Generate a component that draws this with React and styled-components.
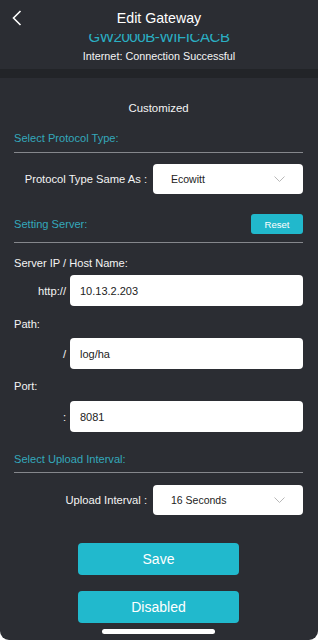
import React from 'react';
import styled, { createGlobalStyle } from 'styled-components';

const GlobalStyle = createGlobalStyle`
    html, body {
        margin: 0;
        padding: 0;
        background: #ffffff;
    }
    * {
        box-sizing: border-box;
    }
`;

const Screen = styled.div`
    width: 318px;
    height: 640px;
    overflow: hidden;
    display: flex;
    flex-direction: column;
    background: #2b2d33;
    border-radius: 0 0 9px 9px;
    font-family: "Liberation Sans", Arial, sans-serif;
    color: #f2f2f2;
`;

const Header = styled.header`
    height: 34px;
    display: grid;
    grid-template-columns: 34px 1fr 34px;
    align-items: center;
    position: relative;
    z-index: 1;
    background: #2b2d33;
`;

const BackButton = styled.button`
    width: 34px;
    height: 34px;
    padding: 0 0 0 12px;
    border: none;
    background: transparent;
    display: flex;
    align-items: center;
    cursor: pointer;
`;

const Title = styled.h1`
    margin: 0;
    text-align: center;
    font-size: 14.2px;
    font-weight: 400;
    color: #ffffff;
    line-height: 36px;
`;

// the list is scrolled a little, so the gateway name slides under the bar
const Info = styled.div`
    height: 35px;
    overflow: hidden;
    text-align: center;
`;

const DeviceName = styled.div`
    margin-top: -5px;
    font-size: 15px;
    letter-spacing: -0.4px;
    line-height: 16px;
    color: #2aafc3;
`;

const Status = styled.div`
    margin-top: 4px;
    font-size: 10.8px;
    line-height: 14px;
    color: #f4f4f4;
`;

const Band = styled.div`
    height: 9px;
    background: #222428;
`;

const Content = styled.main`
    flex: 1;
    display: flex;
    flex-direction: column;
    padding: 0 15px 0 14px;
`;

const Mode = styled.div`
    margin-top: 20px;
    line-height: 20px;
    font-size: 11.4px;
    text-align: center;
    color: #f4f4f4;
`;

const SectionHead = styled.div`
    margin-top: ${p => p.$top}px;
    height: 20px;
    display: flex;
    align-items: center;
    justify-content: space-between;
    font-size: 11.1px;
    color: #34a8bb;
`;

const Divider = styled.hr`
    margin: ${p => p.$top}px 0 0;
    border: none;
    height: 1px;
    background: #85878c;
`;

const ResetButton = styled.button`
    width: 52px;
    height: 20px;
    border: none;
    border-radius: 3px;
    background: #21b8cc;
    color: #ffffff;
    font-family: inherit;
    font-size: 9.6px;
    padding: 0;
`;

const SelectRow = styled.div`
    margin-top: ${p => p.$top}px;
    display: grid;
    grid-template-columns: 133px 150px;
    column-gap: 6px;
    align-items: center;
`;

const RowLabel = styled.span`
    text-align: right;
    font-size: 11.2px;
    color: #f4f4f4;
`;

const Select = styled.div`
    height: 30px;
    border-radius: 4px;
    background: #ffffff;
    display: flex;
    align-items: center;
    justify-content: space-between;
    padding: 0 18px;
    font-size: 10.5px;
    color: #222222;
`;

const FieldLabel = styled.div`
    margin-top: ${p => p.$top}px;
    line-height: 20px;
    font-size: 11.1px;
    color: #f4f4f4;
`;

const InputRow = styled.div`
    margin-top: ${p => p.$top}px;
    display: grid;
    grid-template-columns: 52px 1fr;
    column-gap: 4px;
    align-items: center;
`;

const Prefix = styled.span`
    text-align: right;
    font-size: 11.2px;
    color: #f4f4f4;
`;

const Input = styled.div`
    height: 31px;
    border-radius: 4px;
    background: #ffffff;
    display: flex;
    align-items: center;
    padding-left: 10px;
    font-size: 11px;
    color: #222222;
`;

const ActionButton = styled.button`
    align-self: center;
    margin-top: ${p => p.$top}px;
    width: 161px;
    height: 32px;
    border: none;
    border-radius: 4px;
    background: #21b9cd;
    color: #ffffff;
    font-family: inherit;
    font-size: 14px;
    padding: 0;
`;

const HomeBar = styled.div`
    align-self: center;
    margin-top: 6px;
    width: 113px;
    height: 5px;
    border-radius: 3px;
    background: #ffffff;
`;

const BackIcon = () => (
    <svg width="10" height="16" viewBox="0 0 10 16" fill="none">
        <polyline points="8.5,1 1.5,8 8.5,15" stroke="#ffffff" strokeWidth="1.6" strokeLinejoin="miter" />
    </svg>
);

const Dropdown = ({ value }) => (
    <Select>
        <span>{value}</span>
        <svg width="11" height="6" viewBox="0 0 11 6" fill="none">
            <polyline points="0.5,0.5 5.5,5.5 10.5,0.5" stroke="#b8b8b8" strokeWidth="1" />
        </svg>
    </Select>
);

const App = () => (
    <>
        <GlobalStyle />
        <Screen>
            <Header>
                <BackButton aria-label="Back">
                    <BackIcon />
                </BackButton>
                <Title>Edit Gateway</Title>
                <span />
            </Header>
            <Info>
                <DeviceName>GW2000B-WIFICACB</DeviceName>
                <Status>Internet: Connection Successful</Status>
            </Info>
            <Band />
            <Content>
                <Mode>Customized</Mode>

                <SectionHead $top={10}>Select Protocol Type:</SectionHead>
                <Divider $top={4} />
                <SelectRow $top={11}>
                    <RowLabel>Protocol Type Same As :</RowLabel>
                    <Dropdown value="Ecowitt" />
                </SelectRow>

                <SectionHead $top={20}>
                    <span>Setting Server:</span>
                    <ResetButton>Reset</ResetButton>
                </SectionHead>
                <Divider $top={8} />

                <FieldLabel $top={10}>Server IP / Host Name:</FieldLabel>
                <InputRow $top={2}>
                    <Prefix>http://</Prefix>
                    <Input>10.13.2.203</Input>
                </InputRow>

                <FieldLabel $top={8}>Path:</FieldLabel>
                <InputRow $top={4}>
                    <Prefix>/</Prefix>
                    <Input>log/ha</Input>
                </InputRow>

                <FieldLabel $top={7}>Port:</FieldLabel>
                <InputRow $top={5}>
                    <Prefix>:</Prefix>
                    <Input>8081</Input>
                </InputRow>

                <SectionHead $top={17}>Select Upload Interval:</SectionHead>
                <Divider $top={3} />
                <SelectRow $top={12}>
                    <RowLabel>Upload Interval :</RowLabel>
                    <Dropdown value="16 Seconds" />
                </SelectRow>

                <ActionButton $top={28}>Save</ActionButton>
                <ActionButton $top={16}>Disabled</ActionButton>
                <HomeBar />
            </Content>
        </Screen>
    </>
);

export default App;
